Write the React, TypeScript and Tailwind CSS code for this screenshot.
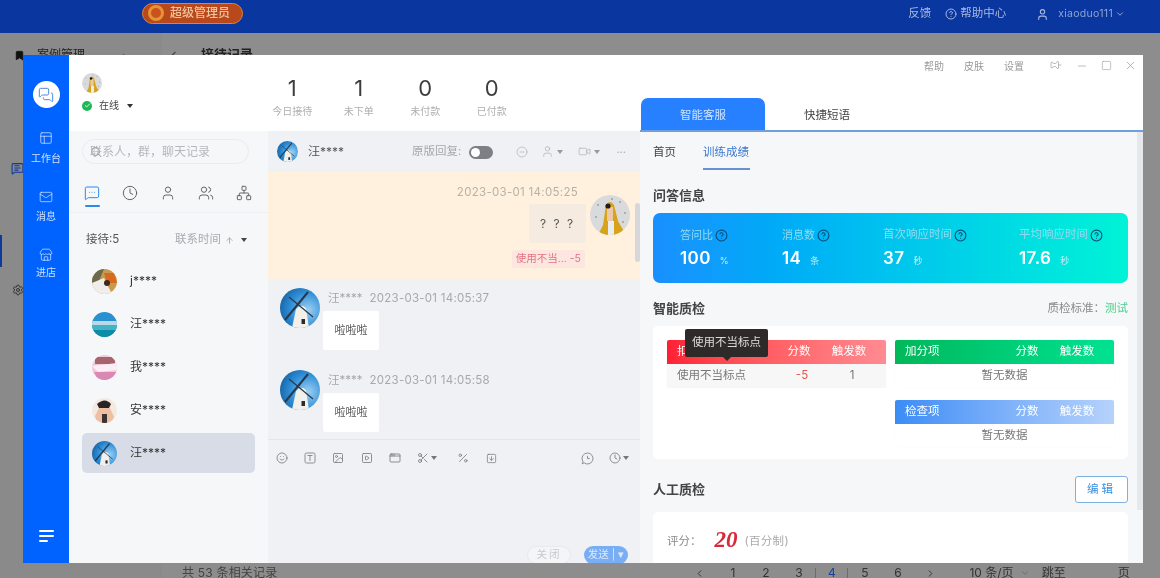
import React from "react";
import {
  MessagesSquare, PanelsTopLeft, Mail, Store, MessageSquareMore, Clock, User, Users, Network, Search,
  ArrowUp, Smile, Image as ImageIcon, SquarePlay, AppWindow, Scissors, Percent, SquareArrowDown,
  Pin, Minus, Square, X, CircleHelp, ChevronDown, ChevronLeft, ChevronRight, ChevronUp, Settings, Bookmark, MessageSquareText,
  Video, CircleMinus, Check,
} from "lucide-react";

const font = "[font-family:'Inter','Noto_Sans_CJK_SC',sans-serif]";

function Caret({ className = "" }: { className?: string }) {
  return <span className={`inline-block w-0 h-0 border-x-[3.5px] border-x-transparent border-t-[4px] ${className}`} />;
}

function Windmill({ size }: { size: number }) {
  return (
    <svg width={size} height={size} viewBox="0 0 40 40" className="shrink-0">
      <defs>
        <radialGradient id="sky" cx="0.7" cy="0.55" r="0.8">
          <stop offset="0" stopColor="#9ed0f2" />
          <stop offset="0.55" stopColor="#2f8fd8" />
          <stop offset="1" stopColor="#125a98" />
        </radialGradient>
        <clipPath id="wmc"><circle cx="20" cy="20" r="20" /></clipPath>
      </defs>
      <g clipPath="url(#wmc)">
        <rect width="40" height="40" fill="url(#sky)" />
        <path d="M16 21 Q21 15 26 20 L29 40 L12 40 Z" fill="#f2f0ea" />
        <rect x="21.5" y="31" width="3.5" height="5" fill="#2b2b2b" />
        <path d="M5 32 L28 4" stroke="#27394a" strokeWidth="2" />
        <path d="M9 9 L33 29" stroke="#27394a" strokeWidth="1.2" />
      </g>
    </svg>
  );
}

function Me({ size }: { size: number }) {
  return (
    <svg width={size} height={size} viewBox="0 0 40 40" className="shrink-0">
      <defs><clipPath id="mec"><circle cx="20" cy="20" r="20" /></clipPath></defs>
      <g clipPath="url(#mec)">
        <rect width="40" height="40" fill="#d9dadb" />
        <g fill="#9aa0a6">
          <circle cx="8" cy="10" r="1" /><circle cx="30" cy="7" r="1" /><circle cx="35" cy="18" r="1" /><circle cx="6" cy="22" r="1" /><circle cx="33" cy="27" r="1" /><circle cx="22" cy="4" r="1" />
        </g>
        <path d="M16 10 Q20 4 24 10 L28 26 L36 40 L8 40 L13 30 Z" fill="#d9a21b" />
        <rect x="17" y="12" width="6" height="14" fill="#e9c9a8" />
        <rect x="18" y="26" width="6" height="14" fill="#e8eef0" />
        <circle cx="18" cy="11" r="2.6" fill="#1d1d1d" />
      </g>
    </svg>
  );
}

function AvatarJ() {
  return (
    <svg width="25" height="25" viewBox="0 0 25 25" className="shrink-0">
      <defs><clipPath id="jc"><circle cx="12.5" cy="12.5" r="12.5" /></clipPath></defs>
      <g clipPath="url(#jc)">
        <rect width="25" height="25" fill="#c99a4e" />
        <path d="M0 0 H12 L7 12 L0 14 Z" fill="#6a6b4e" />
        <path d="M0 14 L12 9 L20 25 L0 25 Z" fill="#f0eeea" />
        <path d="M12 4 L22 4 L25 14 L15 14 Z" fill="#d9691f" />
        <circle cx="15" cy="14" r="3" fill="#3a2a20" />
      </g>
    </svg>
  );
}

function AvatarSea() {
  return (
    <svg width="25" height="25" viewBox="0 0 25 25" className="shrink-0">
      <defs><clipPath id="sc"><circle cx="12.5" cy="12.5" r="12.5" /></clipPath></defs>
      <g clipPath="url(#sc)">
        <rect width="25" height="25" fill="#2792cf" />
        <rect y="9" width="25" height="4" fill="#b9d9e6" />
        <rect y="13" width="25" height="5" fill="#45b3c7" />
        <rect y="18" width="25" height="7" fill="#0a8ea8" />
      </g>
    </svg>
  );
}

function AvatarPink() {
  return (
    <svg width="25" height="25" viewBox="0 0 25 25" className="shrink-0">
      <defs><clipPath id="pc"><circle cx="12.5" cy="12.5" r="12.5" /></clipPath></defs>
      <g clipPath="url(#pc)">
        <rect width="25" height="25" fill="#f1c9dc" />
        <path d="M3 2 H23 V9 H3 Z" fill="#a8646c" />
        <path d="M0 11 L25 8 L25 15 L6 17 Z" fill="#fbeef5" />
        <path d="M2 17 H25 V25 H6 Z" fill="#d987b5" />
      </g>
    </svg>
  );
}

function AvatarAn() {
  return (
    <svg width="25" height="25" viewBox="0 0 25 25" className="shrink-0">
      <defs><clipPath id="ac"><circle cx="12.5" cy="12.5" r="12.5" /></clipPath></defs>
      <g clipPath="url(#ac)">
        <rect width="25" height="25" fill="#f4e9df" />
        <path d="M5 6 Q13 -1 19 6 L17 10 L7 10 Z" fill="#2a2524" />
        <path d="M7 10 H18 L22 19 L19 25 H5 L3 18 Z" fill="#eebfa2" />
        <rect x="10" y="16" width="5" height="9" fill="#3b3331" />
      </g>
    </svg>
  );
}

function TextBoxIcon() {
  return (
    <svg width="12" height="12" viewBox="0 0 12 12" fill="none" stroke="#777" strokeWidth="0.8" className="shrink-0">
      <rect x="1" y="1" width="10" height="10" rx="1.5" />
      <path d="M3.5 3.5 H8.5 M6 3.5 V9" />
    </svg>
  );
}

function ChatClockIcon() {
  return (
    <svg width="13" height="13" viewBox="0 0 13 13" fill="none" stroke="#777" strokeWidth="0.8" className="shrink-0">
      <path d="M6.5 1 A5.5 5.5 0 1 1 3.2 10.9 L1.2 11.8 L2 9.7 A5.5 5.5 0 0 1 6.5 1 Z" />
      <path d="M6.5 3.8 V6.6 H8.8" />
    </svg>
  );
}

function MenuIcon() {
  return (
    <svg width="15" height="14" viewBox="0 0 15 14" fill="none" stroke="#fff" strokeWidth="2" strokeLinecap="round" className="shrink-0">
      <path d="M1 2 H14 M1 7 H14 M1 12 H8" />
    </svg>
  );
}

function Contact({ av, name, active }: { av: React.ReactNode; name: string; active?: boolean }) {
  return (
    <div className={`h-10 mx-[13px] mb-[3px] rounded-[5px] flex items-center pl-[10px] gap-[13px] ${active ? "bg-[#d7dce6]" : ""}`}>
      {av}
      <span className="text-[12px] text-[#333]">{name}</span>
    </div>
  );
}

function Stat({ n, label }: { n: string; label: string }) {
  return (
    <div className="w-[66.5px] flex flex-col items-center">
      <span className="text-[22px] leading-[28px] text-[#3d3d3d]">{n}</span>
      <span className="text-[10px] leading-[16px] mt-[1px] text-[#b0b0b0]">{label}</span>
    </div>
  );
}

function Message({ time }: { time: string }) {
  return (
    <div className="flex pl-3 gap-[3px] h-[82px]">
      <Windmill size={40} />
      <div className="flex flex-col mt-[1px]">
        <div className="flex items-center h-[20px] pl-[5px] gap-[7px] text-[11.5px] text-[#a5a8ae]">
          <span>汪****</span>
          <span className="tracking-[0.25px]">{time}</span>
        </div>
        <div className="mt-[2px] w-[56px] h-[39px] bg-white rounded-[2px] flex items-center justify-center text-[11px] text-[#555]">啦啦啦</div>
      </div>
    </div>
  );
}

function Metric({ label, value, unit, className, size }: { label: string; value: string; unit: string; className: string; size: string }) {
  return (
    <div className={`flex flex-col ${className}`}>
      <div className={`flex items-center gap-[2px] h-[16px] text-[#8fdcf0] ${size}`}>
        {label}
        <CircleHelp size={13} strokeWidth={2} className="text-[#064f7c]" />
      </div>
      <div className="flex items-baseline gap-[9px] mt-[4px] text-white">
        <span className="text-[17px] leading-[22px] font-semibold tracking-[0.4px]">{value}</span>
        <span className="text-[9px] text-[#bfeef7]">{unit}</span>
      </div>
    </div>
  );
}

function QTable({ title, head, children }: { title: string; head: string; children: React.ReactNode }) {
  return (
    <div className="rounded-[3px] shadow-[0_0_3px_rgba(0,0,0,0.025)]">
      <div className={`h-[24px] rounded-t-[2px] flex items-center text-[11.5px] text-white ${head}`}>
        <span className="pl-[10px] w-[107px]">{title}</span>
        <span className="w-[50px] text-center">分数</span>
        <span className="w-[50px] text-center">触发数</span>
      </div>
      {children}
    </div>
  );
}

function Empty() {
  return <div className="h-[23px] flex items-center justify-center text-[11.5px] text-[#777]">暂无数据</div>;
}

const TB = "text-[#777] shrink-0";

export default function App() {
  return (
    <div className={`relative w-[1160px] h-[578px] overflow-hidden bg-[#8b8b8b] blur-[0.5px] ${font}`}>
      {/* Page behind the dialog */}
      <header className="h-[33px] bg-[#0a369f] flex items-center text-[#a9b8df]">
        <div className="ml-[142px] -mt-[7px] w-[101px] h-[21px] rounded-full bg-[#b9491a] border border-[#e0852f] flex items-center pl-[5px] gap-[6px]">
          <span className="w-[16px] h-[16px] rounded-full bg-[#c9531b] border-[3px] border-[#e69338] shrink-0" />
          <span className="text-[12px] font-medium text-[#f0c4a0]">超级管理员</span>
        </div>
        <div className="ml-auto -mt-[5px] flex items-center">
          <span className="text-[11.5px]">反馈</span>
          <CircleHelp size={12} className="ml-[14px] mr-[3px]" />
          <span className="text-[11.5px]">帮助中心</span>
          <User size={13} className="ml-[30px] mr-[9px]" />
          <span className="text-[10.5px] tracking-[0.3px] text-[#8fa2d2]">xiaoduo111</span>
          <ChevronDown size={10} className="ml-[2px] mr-[35px]" />
        </div>
      </header>
      <div className="h-[545px] flex">
        <aside className="w-[162px] flex flex-col bg-[#8a8a8a] text-[#222]">
          <div className="flex items-center pl-[14px] pt-[12px] h-[32px] text-[12px]">
            <Bookmark size={11} fill="#111" className="text-[#111] mr-[12px]" />
            <span>案例管理</span>
            <ChevronUp size={11} className="ml-[33px] text-[#555]" />
          </div>
          <MessageSquareText size={13} className="ml-[11px] mt-[97px] text-[#0d3a9e]" />
          <div className="mt-[60px] w-[2px] h-[32px] bg-[#0d3a9e]" />
          <Settings size={12} className="ml-[12px] mt-[17px] text-[#333]" />
        </aside>
        <main className="flex-1 flex flex-col bg-[#8d8d8d]">
          <div className="flex items-center h-[32px] pt-[12px] text-[13px] font-semibold text-[#222]">
            <ChevronLeft size={13} className="ml-[5px] mr-[21px] text-[#444]" />
            <span>接待记录</span>
          </div>
          <div className="mt-auto h-[20px] pt-[10px] flex items-center text-[12px] leading-[10px] text-[#444]">
            <span className="ml-[20px] tracking-[0.2px]">共 53 条相关记录</span>
            <div className="ml-[406px] flex items-center text-[#333]">
              <ChevronLeft size={11} className="w-[33px]" />
              {["1", "2", "3", "4", "5", "6"].map((p) => (
                <span key={p} className={`w-[33px] text-center ${p === "4" ? "text-[#14419f] border-x border-[#5a6e9e]" : ""}`}>{p}</span>
              ))}
              <ChevronRight size={11} className="w-[33px]" />
              <span className="ml-[22px]">10 条/页</span>
              <ChevronDown size={10} className="ml-[6px] text-[#666]" />
              <span className="ml-[12px]">跳至</span>
              <span className="ml-[52px]">页</span>
            </div>
          </div>
        </main>
      </div>

      {/* Dialog */}
      <div className="absolute left-[23px] top-[55px] w-[1120px] h-[508px] flex bg-white overflow-hidden">
        <nav className="w-[46px] bg-[#0062ff] flex flex-col items-center text-white/80 shrink-0">
          <div className="mt-[26px] w-[27px] h-[27px] rounded-full bg-white flex items-center justify-center">
            <MessagesSquare size={16} strokeWidth={1.5} className="text-[#4f88dc]" />
          </div>
          <PanelsTopLeft size={14} strokeWidth={1.3} className="mt-[23px]" />
          <span className="text-[10px] leading-[14px] mt-[6px]">工作台</span>
          <Mail size={14} strokeWidth={1.3} className="mt-[25px]" />
          <span className="text-[10px] leading-[14px] mt-[5px]">消息</span>
          <Store size={14} strokeWidth={1.3} className="mt-[25px]" />
          <span className="text-[10px] leading-[14px] mt-[3px]">进店</span>
          <div className="mt-auto mb-[20px]"><MenuIcon /></div>
        </nav>

        {/* Left section */}
        <div className="w-[571px] flex flex-col shrink-0">
          <div className="h-[76px] flex bg-white shrink-0">
            <div className="w-[199px] pl-[13px] pt-[18px]">
              <Me size={20} />
              <div className="flex items-center mt-[5px] text-[10px] text-[#444]">
                <span className="w-[10px] h-[10px] rounded-full bg-[#1db954] flex items-center justify-center">
                  <Check size={7} strokeWidth={3} className="text-white" />
                </span>
                <span className="ml-[7px]">在线</span>
                <Caret className="ml-[8px] border-t-[#333]" />
              </div>
            </div>
            <div className="flex pt-[19px] -ml-[9px]">
              <Stat n="1" label="今日接待" />
              <Stat n="1" label="未下单" />
              <Stat n="0" label="未付款" />
              <Stat n="0" label="已付款" />
            </div>
          </div>

          <div className="flex-1 flex min-h-0">
            {/* Contacts */}
            <div className="w-[199px] bg-[#f6f7f9] flex flex-col shrink-0">
              <div className="mt-[8px] mx-[13px] w-[167px] h-[25px] rounded-full border border-[#e9ebef] flex items-center pl-[7px] text-[12px] text-[#b5b8bd]">
                <Search size={12} className="text-[#888] shrink-0 -mr-[12px]" />
                <span className="whitespace-nowrap">联系人，群，聊天记录</span>
              </div>
              <div className="mt-[21px] h-[28px] flex items-start pl-[15px] gap-[22px] border-b border-[#eff0f3] text-[#666] shrink-0">
                <div className="flex flex-col items-center">
                  <MessageSquareMore size={16} strokeWidth={1.5} className="text-[#2b8ae6]" />
                  <span className="w-[15px] h-[2px] mt-[4px] bg-[#2b8ae6] rounded" />
                </div>
                <Clock size={16} strokeWidth={1.5} />
                <User size={16} strokeWidth={1.5} />
                <Users size={16} strokeWidth={1.5} />
                <Network size={16} strokeWidth={1.5} />
              </div>
              <div className="h-[48px] pb-[2px] pt-[8px] flex items-center pl-[17px] pr-[21px] text-[11.5px] shrink-0">
                <span className="text-[#555]">接待:5</span>
                <span className="ml-auto text-[#a8abb0]">联系时间</span>
                <ArrowUp size={9} className="ml-[4px] text-[#999]" />
                <Caret className="ml-[7px] border-t-[#444]" />
              </div>
              <Contact av={<AvatarJ />} name="j****" />
              <Contact av={<AvatarSea />} name="汪****" />
              <Contact av={<AvatarPink />} name="我****" />
              <Contact av={<AvatarAn />} name="安****" />
              <Contact av={<Windmill size={25} />} name="汪****" active />
            </div>

            {/* Chat */}
            <div className="flex-1 bg-[#f0f1f4] flex flex-col min-w-0">
              <div className="h-[41px] flex items-center pl-[9px] shrink-0 text-[#a5a8ae]">
                <Windmill size={21} />
                <span className="ml-[10px] mt-[1px] text-[12px] text-[#555]">汪****</span>
                <span className="ml-[68px] mt-[1px] text-[11.5px]">原版回复:</span>
                <span className="ml-[8px] mt-[1px] w-[24px] h-[13px] rounded-full bg-[#7d7f85] flex items-center pl-[2px]">
                  <span className="w-[9px] h-[9px] rounded-full bg-white" />
                </span>
                <CircleMinus size={12} strokeWidth={1.2} className="ml-[23px]" />
                <User size={13} strokeWidth={1.2} className="ml-[13px]" />
                <Caret className="ml-[3px] border-t-[#999]" />
                <Video size={13} strokeWidth={1.2} className="ml-[15px]" />
                <Caret className="ml-[3px] border-t-[#999]" />
                <span className="ml-[16px] text-[11px] leading-none -mt-[4px]">...</span>
              </div>
              <div className="h-[107px] bg-[#fff1de] flex justify-end relative shrink-0">
                <div className="flex flex-col items-end pt-[12px]">
                  <span className="text-[11.5px] leading-[16px] tracking-[0.3px] text-[#b7b2a6] mr-[8px] whitespace-nowrap">2023-03-01 14:05:25</span>
                  <div className="mt-[4px] w-[57px] h-[39px] bg-[#f5ebe0] rounded-[2px] flex items-center justify-center text-[12px] text-[#555] tracking-[2px]">? ? ?</div>
                  <div className="mt-[7px] mr-[1px] h-[18px] px-[4px] bg-[#fde6e0] rounded-[2px] flex items-center text-[10.5px] text-[#e5707f]">使用不当... -5</div>
                </div>
                <div className="ml-[4px] mr-[10px] mt-[23px]"><Me size={40} /></div>
                <div className="absolute right-0 top-[31px] w-[5px] h-[59px] rounded-full bg-[#d6d7da]" />
              </div>
              <div className="h-[161px] pt-[9px] border-b border-[#e4e6ea] shrink-0">
                <Message time="2023-03-01 14:05:37" />
                <Message time="2023-03-01 14:05:58" />
              </div>
              <div className="h-[36px] flex items-center pl-[8px] pr-[11px] shrink-0">
                <Smile size={12} strokeWidth={1.6} className={TB} />
                <span className="ml-[16px]"><TextBoxIcon /></span>
                <ImageIcon size={12} strokeWidth={1.6} className={`${TB} ml-[16px]`} />
                <SquarePlay size={12} strokeWidth={1.6} className={`${TB} ml-[17px]`} />
                <AppWindow size={12} strokeWidth={1.6} className={`${TB} ml-[16px]`} />
                <Scissors size={12} strokeWidth={1.6} className={`${TB} ml-[16px]`} />
                <Caret className="ml-[2px] border-t-[#777]" />
                <Percent size={12} strokeWidth={1.6} className={`${TB} ml-[20px]`} />
                <SquareArrowDown size={11} strokeWidth={1.6} className={`${TB} ml-[17px]`} />
                <span className="ml-auto"><ChatClockIcon /></span>
                <Clock size={12} strokeWidth={1.6} className={`${TB} ml-[15px]`} />
                <Caret className="ml-[2px] border-t-[#777]" />
              </div>
              <div className="flex-1 flex items-end justify-end pr-[12px] gap-[13px] text-[10.5px] -mb-px">
                <span className="w-[44px] h-[18px] rounded-full bg-[#f4f5f7] border border-[#e8e9ec] flex items-center justify-center text-[#c6c8cc] tracking-[2px]">关闭</span>
                <span className="w-[44px] h-[18px] rounded-full bg-[#79aef5] flex items-center justify-center text-[#dbe9fd]">发送 | ▾</span>
              </div>
            </div>
          </div>
        </div>

        {/* Right section */}
        <div className="flex-1 flex flex-col min-w-0 bg-white">
          <div className="h-[43px] flex items-start justify-end pt-[4px] pr-[6px] text-[#999] shrink-0">
            <span className="text-[10px] leading-[14px]">帮助</span>
            <span className="text-[10px] leading-[14px] ml-[20px]">皮肤</span>
            <span className="text-[10px] leading-[14px] ml-[20px]">设置</span>
            <Pin size={12} strokeWidth={1.3} className="ml-[26px] -rotate-90" />
            <Minus size={12} strokeWidth={1.3} className="ml-[14px] mt-[1px]" />
            <Square size={11} strokeWidth={1.3} className="ml-[13px] mt-[1px]" />
            <X size={13} strokeWidth={1.3} className="ml-[12px]" />
          </div>
          <div className="h-[34px] flex border-b-2 border-[#6f9fdc] shrink-0 text-[11.5px]">
            <div className="w-[124px] ml-[1px] pt-[3px] rounded-t-[7px] bg-[#2680ff] flex items-center justify-center text-[#cfe2ff]">智能客服</div>
            <div className="w-[124px] pt-[3px] flex items-center justify-center text-[#444]">快捷短语</div>
          </div>
          <div className="flex-1 flex min-h-0 bg-[#f6f7f9]">
            <div className="flex-1 flex flex-col pl-[13px] pr-[9px] min-w-0">
              <div className="h-[38px] flex items-start gap-[27px] pt-[12px] text-[11.5px] shrink-0">
                <span className="text-[#444] leading-[16px]">首页</span>
                <span className="text-[#3c78d0] leading-[16px] h-[26px] w-[47px] whitespace-nowrap border-b-2 border-[#6c8fd2]">训练成绩</span>
              </div>
              <div className="h-[43px] pt-[8px] flex items-center text-[13px] font-semibold text-[#444] shrink-0">问答信息</div>
              <div className="h-[70px] rounded-[7px] bg-gradient-to-r from-[#198fff] to-[#00f3d6] flex pt-[14px] pl-[27px] shrink-0">
                <Metric label="答问比" value="100" unit="%" className="w-[102px]" size="text-[11px]" />
                <Metric label="消息数" value="14" unit="条" className="w-[101px]" size="text-[11px]" />
                <Metric label="首次响应时间" value="37" unit="秒" className="w-[136px]" size="text-[11.5px]" />
                <Metric label="平均响应时间" value="17.6" unit="秒" className="w-[100px]" size="text-[11.5px]" />
              </div>
              <div className="h-[43px] pt-[8px] flex items-center justify-between shrink-0">
                <span className="text-[13px] font-semibold text-[#444]">智能质检</span>
                <span className="text-[11.5px] text-[#8a8a8a]">质检标准：<span className="text-[#4fcf8f]">测试</span></span>
              </div>
              <div className="relative h-[133px] bg-white rounded-[5px] grid grid-cols-2 gap-x-[9px] px-[14px] pt-[14px] shrink-0">
                <div>
                  <QTable title="扣分项" head="bg-gradient-to-r from-[#ff1f35] to-[#ff8b92]">
                    <div className="h-[24px] bg-[#f7f7f7] flex items-center text-[11.5px] text-[#777]">
                      <span className="pl-[10px] w-[110px]">使用不当标点</span>
                      <span className="w-[50px] text-center text-[#e2574c]">-5</span>
                      <span className="w-[50px] text-center">1</span>
                    </div>
                  </QTable>
                </div>
                <div className="flex flex-col gap-[13px]">
                  <QTable title="加分项" head="bg-gradient-to-r from-[#00b85a] to-[#00e291]"><Empty /></QTable>
                  <QTable title="检查项" head="bg-gradient-to-r from-[#3b8cf5] to-[#b6d2fb]"><Empty /></QTable>
                </div>
                <div className="absolute left-[32px] top-[3px] w-[83px] h-[28px] rounded-[2px] bg-[#2e2a2a] flex items-center justify-center text-[11.5px] text-[#e0d8d8]">
                  使用不当标点
                  <span className="absolute left-[38px] bottom-[-4px] w-0 h-0 border-x-[4px] border-x-transparent border-t-[4px] border-t-[#2e2a2a]" />
                </div>
              </div>
              <div className="h-[53px] pt-[8px] flex items-center justify-between shrink-0">
                <span className="text-[13px] font-semibold text-[#444]">人工质检</span>
                <span className="w-[53px] h-[27px] rounded-[3px] border border-[#7fb1de] bg-white flex items-center justify-center text-[11.5px] tracking-[3px] text-[#3a8fe0]">编辑</span>
              </div>
              <div className="h-[60px] bg-white rounded-[5px] flex items-start pt-[18px] pl-[14px] text-[11.5px] text-[#8a8a8a] shrink-0">
                <span className="leading-[22px]">评分：</span>
                <span className="ml-[13px] -mt-[1px] text-[23px] leading-[22px] font-bold italic text-[#d8283a] [font-family:'Liberation_Serif',serif]">20</span>
                <span className="ml-[7px] leading-[22px] text-[#aaa] tracking-[0.3px]">(百分制)</span>
              </div>
            </div>
            <div className="w-[6px] shrink-0 bg-[#f6f7f9]">
              <div className="h-[378px] bg-[#e6e8ec]" />
            </div>
          </div>
        </div>
      </div>
    </div>
  );
}
